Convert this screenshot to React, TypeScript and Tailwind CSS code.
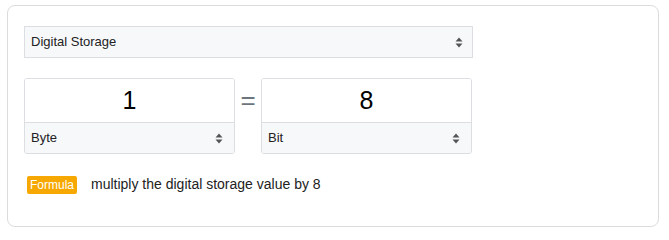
const Arrows = () => (
  <svg width="8" height="11" viewBox="0 0 8 11" className="shrink-0">
    <path d="M0.5 4.5 L4 0.5 L7.5 4.5 Z" fill="#555" />
    <path d="M0.5 6.5 L4 10.5 L7.5 6.5 Z" fill="#555" />
  </svg>
);

function UnitBox({ value, unit }: { value: string; unit: string }) {
  return (
    <div className="w-[211px] border border-[#dcdee2] rounded-[3px] overflow-hidden">
      <div className="h-[43px] flex items-center justify-center bg-white text-[25px] text-black">
        {value}
      </div>
      <div className="h-[31px] flex items-center justify-between pl-[6px] pr-[11px] bg-[#f7f8fa] border-t border-[#dcdee2] text-[13px] text-[#222]">
        <span>{unit}</span>
        <Arrows />
      </div>
    </div>
  );
}

export default function App() {
  return (
    <div className="w-[669px] h-[234px] bg-white pt-[5px] pl-[7px] font-['Liberation_Sans',Arial,sans-serif]">
      <div className="w-[652px] h-[222px] border border-[#dcdcdc] rounded-[8px] pt-[20px] pl-[16px]">
        <div className="w-[449px] h-[32px] flex items-center justify-between pl-[6px] pr-[9px] bg-[#f7f8fa] border border-[#dcdee2] text-[13px] text-[#222]">
          <span>Digital Storage</span>
          <Arrows />
        </div>
        <div className="flex items-start mt-[20px]">
          <UnitBox value="1" unit="Byte" />
          <div className="w-[26px] h-[43px] flex items-center justify-center text-[26px] text-[#6c757d] leading-none">
            =
          </div>
          <UnitBox value="8" unit="Bit" />
        </div>
        <div className="flex items-center mt-[20px] ml-[3px]">
          <span className="h-[18px] px-[3px] flex items-center bg-[#f6a800] text-white text-[12px] rounded-[2px]">
            Formula
          </span>
          <span className="ml-[14px] text-[14px] text-[#222]">
            multiply the digital storage value by 8
          </span>
        </div>
      </div>
    </div>
  );
}
